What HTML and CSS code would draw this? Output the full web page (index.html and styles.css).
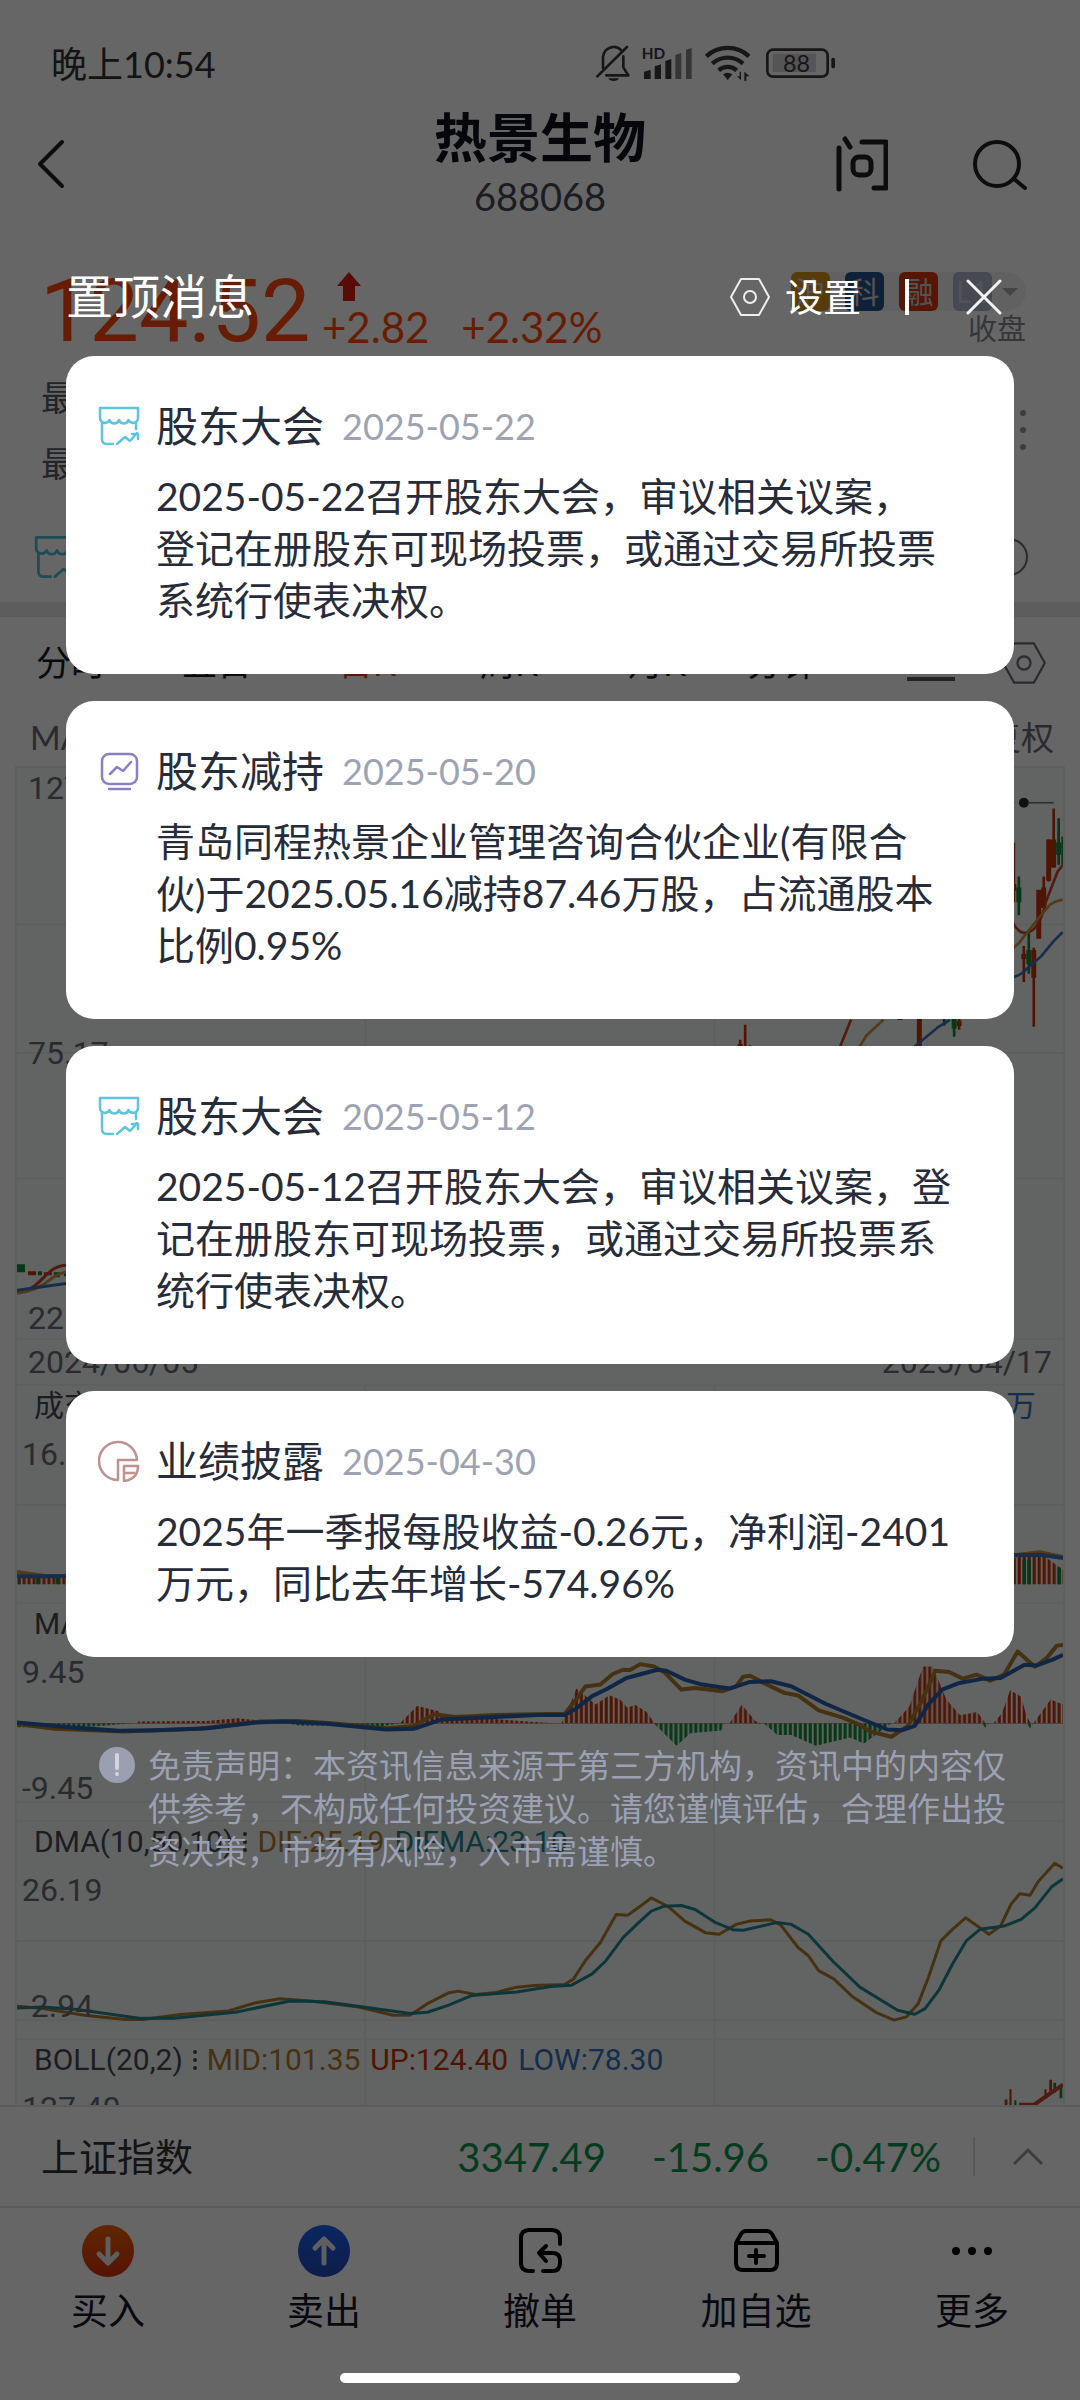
FILE: index.html
```html
<!DOCTYPE html>
<html lang="zh-CN">
<head>
<meta charset="utf-8">
<meta name="viewport" content="width=device-width, initial-scale=1">
<title>热景生物 688068</title>
<link rel="stylesheet" href="styles.css">
</head>
<body>
<svg class="defs" aria-hidden="true">
  <defs>
    <symbol id="shop" viewBox="0 0 42 42">
      <path d="M2 3h38v10a5 5 0 0 1-9.500 2a5 5 0 0 1-9.500 0a5 5 0 0 1-9.500 0A5 5 0 0 1 2 13zM4 18v16q0 5 5 5h6M38 18v6M19 39l8-7 5 4 7-8M34 29h6v5" fill="none" stroke="currentColor" stroke-width="2.500" stroke-linejoin="round" stroke-linecap="round"/>
    </symbol>
    <symbol id="hex" viewBox="0 0 42 42">
      <path d="M12 3h18l10 18-10 18H12L2 21z" fill="none" stroke="currentColor" stroke-width="2" stroke-linejoin="round"/>
      <circle cx="21" cy="21" r="6" fill="none" stroke="currentColor" stroke-width="2"/>
    </symbol>
    <pattern id="red-bars" width="7.250" height="700" y="-100" patternUnits="userSpaceOnUse"><path d="M1 0h4.500v700H1z" fill="#c9330a"/></pattern>
    <pattern id="volume-bars" width="7.250" height="700" y="132" patternUnits="userSpaceOnUse"><path d="M1 0h4.500v700H1z" fill="#c9330a"/></pattern>
    <pattern id="green-bars" width="7.250" height="700" y="-100" patternUnits="userSpaceOnUse"><path d="M1 0h4.500v700H1z" fill="#108a38"/></pattern>
    <linearGradient id="buy" x2="0" y2="1"><stop stop-color="#ee6200"/><stop offset="1" stop-color="#d83010"/></linearGradient>
    <linearGradient id="sell" x2="0" y2="1"><stop stop-color="#1862ee"/><stop offset="1" stop-color="#2348b8"/></linearGradient>
  </defs>
</svg>

<div class="app">
  <div class="status">
    <time>晚上10:54</time>
    <svg class="status-icons" viewBox="45 45 720 120" aria-hidden="true">
      <g fill="none" stroke="#3a3a3a" stroke-width="8" stroke-linecap="round" stroke-linejoin="round">
        <path d="M66 118V84a32 32 0 0 1 55-20M127 82v33l15 24H76M138 54L49 142"/>
        <rect x="559" y="62" width="181" height="81" rx="17"/>
      </g>
      <g fill="#3a3a3a">
        <path d="M82 148h32a17 12 0 0 1-32 0zM189 128l20-6v28h-20zM221 112l19-6v44h-19zM253 96l18-6v60h-18z"/>
        <path d="M283 78l18-6v78h-18zM315 62l17-5v93h-17z" fill="#858585"/>
        <path d="M440 153l-14-17a24 24 0 0 1 28 0z"/><rect x="751" y="86" width="11" height="32" rx="5"/>
        <path d="M480 128v26l-12-12h8v-14zM490 156v-28l16 14h-10v14z"/>
        <rect x="575" y="74" width="130" height="55" fill="#d5d5d5"/>
      </g>
      <path d="M376 82a94 94 0 0 1 128 0M394 104a68 68 0 0 1 92 0M413 124a40 40 0 0 1 54 0" fill="none" stroke="#3a3a3a" stroke-width="13"/>
      <text x="182" y="90" font-size="46" font-weight="700">HD</text>
      <text x="606" y="128" font-size="70">88</text>
    </svg>
  </div>

  <header class="top">
    <button class="icon-button back" aria-label="返回"><svg viewBox="0 0 30 52"><path d="M26 4L4 26l22 22" fill="none" stroke="#222" stroke-width="4" stroke-linecap="round" stroke-linejoin="round"/></svg></button>
    <div class="stock"><h1>热景生物</h1><span>688068</span></div>
    <div class="top-actions">
      <button class="icon-button ask" aria-label="问"><svg viewBox="0 0 52 56"><path d="M3 12v41M9 3l5 8M26 6h24v46h-12" fill="none" stroke="#222" stroke-width="5" stroke-linecap="round" stroke-linejoin="round"/><rect x="17" y="21" width="18" height="18" rx="6" fill="none" stroke="#222" stroke-width="5"/></svg></button>
      <button class="icon-button find" aria-label="搜索"><svg viewBox="0 0 56 52"><g fill="none" stroke="#222" stroke-width="4" stroke-linecap="round"><circle cx="25" cy="26" r="22"/><path d="M42 41l11 9"/></g></svg></button>
    </div>
  </header>

  <section class="quote">
    <strong class="price">124.52</strong>
    <div class="change">
      <svg viewBox="0 0 24 32" aria-hidden="true"><path d="M12 0l12 14h-6v15H6V14H0z" fill="#d71c10"/></svg>
      <p><span>+2.82</span><span>+2.32%</span></p>
    </div>
    <div class="market">
      <div class="tags"><b class="sh">沪</b><b class="ke">科</b><b class="rong">融</b><b class="level">L1</b><i></i></div>
      <span>收盘</span>
    </div>
  </section>
  <section class="stats">
    <div><p>最高</p><p>最低</p></div>
    <svg viewBox="0 0 8 42" aria-hidden="true"><path d="M4 4h0M4 21h0M4 38h0" stroke="#98989c" stroke-width="6" stroke-linecap="round"/></svg>
  </section>
  <section class="notice">
    <svg class="shop"><use href="#shop"/></svg>
    <svg class="ring" viewBox="0 0 40 40"><circle cx="20" cy="20" r="18" fill="none" stroke="#686b78" stroke-width="2"/></svg>
  </section>
  <nav class="periods">
    <button>分时</button><button>五日</button><button class="active">日K</button><button>周K</button><button>月K</button><button>分钟</button>
    <svg class="indicator" viewBox="0 0 48 42"><path d="M0 37h48M8 26l12-10 10 8 12-14" fill="none" stroke="#555867" stroke-width="4"/></svg>
    <svg class="gear"><use href="#hex"/></svg>
  </nav>
  <div class="average"><span>MA</span><span>前复权</span></div>

  <main class="charts">
    <div class="panel main">
      <svg viewBox="15 766 1050 572" preserveAspectRatio="none" aria-hidden="true">
        <path d="M15 923h1050M15 1052h1050M15 1178h1050M365 766v572M715 766v572" class="grid"/>
        <g transform="translate(700 680) scale(.333)" fill="none">
          <g stroke="#c9330a">
            <path stroke-width="8" d="M948 483v180M978 795v108M1008 800v238M1038 585v95M1053 474v126M1068 380v178M138 1032v66M123 1077v21M783 1010v37"/>
            <path stroke-width="15" d="M948 608v20M978 818v16M1008 807v83M1023 625v148M1038 618v62M1053 474v124M1068 474v84M663 1000v100M783 1020v16M605 1010v8M123 1090v10"/>
          </g>
          <g stroke="#108a38">
            <path stroke-width="8" d="M963 585v117M993 757v121M1083 410v140M1095 465v85M768 1000v68M153 1094v6M738 1010v25"/>
            <path stroke-width="15" d="M963 618v45M993 807v43M1083 483v37M768 1010v33"/>
          </g>
          <g stroke-width="8">
            <path stroke="#c94428" d="M942 720q20 38 43 35q40-5 60-95l35-90 15-19M457 1017l-33 81"/>
            <path stroke="#d0923f" d="M942 803q20-12 34-34l46-58 36-42q15-10 37-14M555 1017l-52 48-20 33"/>
            <path stroke="#3b70bd" d="M942 888q20 0 40-20l48-42 38-46 27-27M755 1017l-35 22-72 59"/>
          </g>
          <path d="M993 363h75" stroke="#777" stroke-width="5"/><circle cx="978" cy="363" r="15" fill="#272c38"/>
          <circle cx="924" cy="363" r="25" fill="#272c38"/>
        </g>
        <path d="M15 1264h8v8h-8zM52 1272h6v5h-6zM36 1271h4v4h-4zM62 1273h4v3h-4z" fill="#108a38"/><path d="M26 1271h8v4h-8zM42 1272h8v3h-8z" fill="#c9330a"/>
        <g fill="none" stroke-width="3"><path d="M15 1292c24 0 28-28 51-27" stroke="#c94428"/><path d="M15 1293q20-2 34-14t32-4" stroke="#d0923f"/><path d="M15 1290l51-7" stroke="#3b70bd"/></g>
      </svg>
      <span>127.40</span><span>75.17</span><span>22.93</span>
    </div>
    <div class="dates"><span>2024/06/05</span><span>2025/04/17</span></div>
    <div class="panel sub">
      <svg viewBox="22 132 1524 654" preserveAspectRatio="none" aria-hidden="true">
        <path d="M22 492h1524M529 132v654M1038 132v654" class="grid"/>
        <path d="M22 732v-20l30-2 44 4v18zM1472 732v-78l40-16 34 50v44z" fill="url(#volume-bars)"/>
        <path d="M24 732v-20h3v20zM50 732v-22h4v22zM79 732v-20h4v20zM1487 732v-75h5v75zM1494 732v-75h5v75zM1538 732v-50h5v50z" fill="#108a38"/>
        <g class="trend"><path d="M22 695l40 12h34M1472 645l40-10 34 15" stroke="#d0923f"/><path d="M22 708h74M1472 645l40-2 34 10" stroke="#3b70bd"/></g>
      </svg>
      <p class="legend"><span>成交量</span><span class="blue end">16.51万</span></p>
      <span>16.51</span>
    </div>
    <div class="panel sub">
      <svg viewBox="22 -114 1524 654" preserveAspectRatio="none" aria-hidden="true">
        <path d="M22 485h1524M529-114v654M1038-114v654" class="grid"/>
        <path d="M198 247v-5l100-2 45-8 30 6 40 9zM580 247l25-52 30 15 20 28 50-6 50 8 50 7zM815 247l8-30 14-75 12 20 16 28 20-28 16 14 10 24 12-8 16 20 12 35zM1060 247l18-56 20 50 8 6zM1300 247l22-50 20-122h14l20 100 20 48 25-10 12 34zM1445 247l12-30 12-70 16 20 8 60 6 20zM1503 247l25-72 18 15v57z" fill="url(#red-bars)"/>
        <path d="M22 247v12h70l40-2 60-10zM415 247l18 7 120 2 28-9zM950 247l33 68 20-38 45-8 4-22zM1110 247l20 36h20l36 32 50-25 20 18 40-61zM1428 247l5 14 5-14zM1494 247l4 16 5-16z" fill="url(#green-bars)"/>
        <path d="M22 247h1524" stroke="#b46550" stroke-width="2"/>
        <g class="trend">
          <path stroke="#b07a2c" d="M22 249L77 264 177 272 287 264 377 242 430 240 480 247 560 262 600 255 630 220 660 228 720 222 820 218 835 180 850 136 872 130 890 98 905 85 915 86 930 68 950 75 965 92 990 145 1010 140 1050 150 1070 135 1080 106 1090 103 1110 125 1140 155 1160 163 1190 208 1225 230 1250 252 1265 272 1296 288 1320 255 1340 180 1360 88 1380 92 1400 112 1420 100 1440 118 1460 100 1480 30 1505 76 1522 50 1537 12 1546 10"/>
          <path stroke="#275fae" d="M22 245L90 258 170 270 225 268 300 262 370 245 410 242 470 248 560 266 600 264 640 236 720 228 780 222 820 222 835 205 860 165 880 145 910 110 955 85 968 88 995 115 1020 130 1060 142 1090 122 1120 120 1150 135 1200 188 1250 232 1290 266 1312 268 1330 255 1350 190 1370 145 1395 125 1430 112 1455 110 1490 70 1508 72 1530 55 1546 40"/>
        </g>
      </svg>
      <p class="legend"><span>MACD(12,26,9)</span></p>
      <span>9.45</span><span class="low">-9.45</span>
    </div>
    <div class="panel sub">
      <svg viewBox="22 -120 1524 654" preserveAspectRatio="none" aria-hidden="true">
        <path d="M22 240h1524M22 480h1524M529-120v654M1038-120v654" class="grid"/>
        <g class="trend thin">
          <path stroke="#b07a2c" d="M22 438L60 445 120 465 180 478 205 478 260 463 330 452 370 427 405 415 450 422 520 440 570 465 595 464 620 430 650 398 665 392 690 402 720 396 750 380 775 375 820 372 833 355 850 300 872 245 895 160 912 162 930 135 946 110 970 135 995 180 1025 215 1045 220 1070 190 1090 180 1120 176 1135 192 1160 260 1175 285 1190 330 1212 355 1240 410 1275 458 1300 480 1318 470 1335 430 1350 350 1368 240 1385 205 1404 170 1425 200 1438 220 1455 195 1470 130 1483 97 1498 102 1510 60 1534 5 1546 20"/>
          <path stroke="#228894" d="M22 443L60 440 110 448 200 474 250 474 340 456 420 422 470 424 540 444 595 460 620 456 650 435 685 405 750 395 800 378 830 374 860 340 880 300 905 230 925 190 946 150 965 135 990 133 1010 145 1040 185 1065 206 1080 208 1130 184 1150 190 1175 220 1210 300 1250 380 1305 450 1330 462 1345 445 1365 390 1385 310 1405 240 1425 205 1460 195 1485 175 1505 140 1530 75 1546 52"/>
        </g>
      </svg>
      <p class="legend"><span>DMA(10,50,10)<i></i></span><span class="gold">DIF:25.19</span><span class="teal">DIFMA:23.10</span></p>
      <span>26.19</span><span class="low">-2.94</span>
    </div>
    <div class="panel boll">
      <svg viewBox="22 534 1524 201" preserveAspectRatio="none" aria-hidden="true">
        <path d="M529 534v201M1038 534v201" class="grid"/>
        <path d="M1461 718v17h4v-17zM1468 686v49h3v-49zM1526 657v40h4v-40zM1519 686v30h3v-30z" fill="#c9330a"/><path d="M1475 720v15h3v-15zM1532 666v30h4v-30zM1541 676v38h4v-38z" fill="#108a38"/>
        <path class="trend" d="M1482 734h22l24-36 18-26" stroke="#c94428"/>
      </svg>
      <p class="legend"><span>BOLL(20,2)<i></i></span><span class="gold">MID:101.35</span><span class="red">UP:124.40</span><span class="blue">LOW:78.30</span></p>
      <span>127.40</span>
    </div>
  </main>

  <section class="index">
    <span class="index-name">上证指数</span><span>3347.49</span><span>-15.96</span><span>-0.47%</span>
    <button class="icon-button expand" aria-label="展开"><svg viewBox="0 0 32 20"><path d="M2 17L16 3l14 14" fill="none" stroke="#9699a6" stroke-width="3"/></svg></button>
  </section>
  <footer class="toolbar">
    <button><svg viewBox="0 0 54 54"><circle cx="27" cy="27" r="26" fill="url(#buy)"/><path d="M27 15v23M18 30l9 9 9-9" class="arrow"/></svg>买入</button>
    <button><svg viewBox="0 0 54 54"><circle cx="27" cy="27" r="26" fill="url(#sell)"/><path d="M27 39V16M18 24l9-9 9 9" class="arrow"/></svg>卖出</button>
    <button><svg viewBox="0 0 54 54"><path d="M20 47h-3q-9 0-9-8V14q0-8 8-8h23q8 0 8 8v6M30 47h9q8 0 8-8v-3q0-7-8-7H27M33 22l-7 7 7 8" class="line"/></svg>撤单</button>
    <button><svg viewBox="0 0 54 54"><path d="M7 19h41M7 19v20q0 7 7 7h27q7 0 7-7V19l-5-9q-2-3-5-3H17q-3 0-5 3zM27 26v13M20 32h15" class="line"/></svg>加自选</button>
    <button><svg viewBox="0 0 54 54"><path d="M11 27h0M27 27h0M43 27h0" stroke="#000" stroke-width="8" stroke-linecap="round"/></svg>更多</button>
  </footer>
</div>

<div class="overlay" role="dialog" aria-label="置顶消息">
  <header class="overlay-head">
    <h2>置顶消息</h2>
    <button class="settings"><svg><use href="#hex"/></svg>设置</button>
    <i class="bar"></i>
    <button class="icon-button close" aria-label="关闭"><svg viewBox="0 0 36 36"><path d="M2 2l32 32M34 2L2 34" stroke="#f2f2f2" stroke-width="3" stroke-linecap="round"/></svg></button>
  </header>
  <div class="cards">
    <article class="card">
      <svg class="cyan"><use href="#shop"/></svg>
      <h3>股东大会 <time>2025-05-22</time></h3>
      <p>2025-05-22召开股东大会，审议相关议案，<br>登记在册股东可现场投票，或通过交易所投票<br>系统行使表决权。</p>
    </article>
    <article class="card">
      <svg viewBox="0 0 42 42"><g fill="none" stroke="#8a80c6" stroke-width="2.500" stroke-linecap="round" stroke-linejoin="round"><rect x="4" y="4" width="35" height="30" rx="7"/><path d="M11 39h21M12 24l7-7 6 4 8-9"/></g></svg>
      <h3>股东减持 <time>2025-05-20</time></h3>
      <p>青岛同程热景企业管理咨询合伙企业(有限合<br>伙)于2025.05.16减持87.46万股，占流通股本<br>比例0.95%</p>
    </article>
    <article class="card">
      <svg class="cyan"><use href="#shop"/></svg>
      <h3>股东大会 <time>2025-05-12</time></h3>
      <p>2025-05-12召开股东大会，审议相关议案，登<br>记在册股东可现场投票，或通过交易所投票系<br>统行使表决权。</p>
    </article>
    <article class="card">
      <svg viewBox="0 0 42 42"><g fill="none" stroke="#c39090" stroke-width="2.500" stroke-linejoin="round"><path d="M20 40A19 19 0 1 1 39 20H20z"/><path d="M26 26h14q0 13-14 15z"/><path d="M26 33h11"/></g></svg>
      <h3>业绩披露 <time>2025-04-30</time></h3>
      <p>2025年一季报每股收益-0.26元，净利润-2401<br>万元，同比去年增长-574.96%</p>
    </article>
  </div>
  <aside class="disclaimer">
    <svg viewBox="0 0 36 36" aria-hidden="true"><circle cx="18" cy="18" r="18" fill="#9aa0b2"/><path d="M18 8v13M18 27h0" stroke="#d3d6de" stroke-width="4" stroke-linecap="round"/></svg>
    <p>免责声明：本资讯信息来源于第三方机构，资讯中的内容仅供参考，不构成任何投资建议。请您谨慎评估，合理作出投资决策，市场有风险，入市需谨慎。</p>
  </aside>
  <i class="home"></i>
</div>
</body>
</html>
```
FILE: styles.css
```css
* { box-sizing: border-box; }
body {
  position: relative;
  margin: 0;
  background: #fff;
  color: #272c3a;
  font-family: Lato, "Noto Sans CJK SC", sans-serif;
  line-height: 1.3;
}
h1, h2, h3, p { margin: 0; font-weight: 400; }
svg { display: block; flex: none; }
i { font-style: normal; }
button {
  padding: 0;
  border: 0;
  background: none;
  color: inherit;
  font: inherit;
  cursor: pointer;
}
.defs { position: absolute; width: 0; height: 0; }
.app { display: flex; flex-direction: column; min-height: 100vh; overflow: hidden; }

.status {
  display: flex;
  align-items: center;
  height: 106px;
  padding: 22px 244px 0 51px;
  color: #333;
  font-size: 36px;
}
.status-icons { width: 240px; height: 40px; margin-left: auto; fill: #3a3a3a; }

.top {
  display: grid;
  grid-template-columns: 1fr auto 1fr;
  align-items: center;
  height: 116px;
  padding: 0 52px 0 36px;
}
.back svg { width: 30px; height: 52px; }
.back { justify-self: start; }
.top { padding: 0 36px; }
.stock { text-align: center; color: #444958; font-size: 38px; line-height: 52px; }
.stock h1 { color: #10131f; font-size: 53px; font-weight: 700; line-height: 64px; }
.top-actions { display: flex; justify-content: flex-end; align-items: center; gap: 84px; padding-right: 16px; }
.ask svg { width: 52px; height: 56px; }
.find svg { width: 56px; height: 52px; }

.quote {
  display: flex;
  align-items: flex-start;
  height: 142px;
  padding: 50px 54px 0 40px;
  color: #ff4a08;
}
.price { width: 282px; font: 400 88px/78px Roboto, sans-serif; }
.change svg { width: 24px; height: 32px; margin-left: 15px; }
.change p { display: flex; gap: 32px; font-size: 42px; line-height: 46px; }
.market { margin-left: auto; color: #858894; font-size: 29px; line-height: 36px; text-align: right; }
.tags { display: flex; gap: 15px; height: 39px; border-radius: 6px 20px 20px 6px; background: #f3f3f4; }
.tags b {
  width: 39px;
  border-radius: 6px;
  color: #d0d0d4;
  font-size: 30px;
  font-weight: 400;
  line-height: 38px;
  text-align: center;
}
.tags .sh { background: #d8961c; }
.tags .ke { background: #27508e; }
.tags .rong { background: #d83808; }
.tags .level { background: #aeb3cc; }
.tags i { align-self: center; margin: 0 8px 0 -5px; border: 8px solid transparent; border-top-color: #aaa; border-bottom: 0; }

.stats {
  display: flex;
  justify-content: space-between;
  align-items: center;
  height: 132px;
  padding: 0 53px 0 41px;
  color: #555a68;
  font-size: 35px;
  line-height: 66px;
}
.stats svg { width: 8px; height: 42px; }
.notice {
  display: flex;
  justify-content: space-between;
  align-items: center;
  height: 121px;
  padding: 16px 51px 0 34px;
  border-bottom: 15px solid #e8e8ed;
}
.shop { width: 46px; height: 46px; color: #48bed8; }
.ring { width: 40px; height: 40px; }
.periods {
  display: grid;
  grid-template-columns: 146fr 156fr 142fr 148fr 119fr 160fr 94fr 47fr;
  align-items: center;
  height: 92px;
  padding: 0 32px 0 36px;
  color: #151a28;
  font-size: 35px;
}
.periods button { text-align: left; }
.periods .active { color: #e8401c; }
.indicator { width: 48px; height: 42px; }
.gear { width: 46px; height: 46px; color: #686b78; }
.average {
  display: flex;
  justify-content: space-between;
  height: 57px;
  padding: 0 26px 0 30px;
  color: #686b78;
  font-size: 33px;
  line-height: 56px;
}

.charts { padding: 0 15px; color: #686b78; font-family: Roboto, "Noto Sans CJK SC", sans-serif; font-size: 32px; line-height: 40px; }
.panel, .dates {
  border: 2px solid #eaf0ed;
  border-width: 2px 2px 0;
  background: #f5faf7;
}
.panel { position: relative; display: flex; flex-direction: column; overflow: hidden; }
.panel > svg { position: absolute; inset: 0; width: 100%; height: 100%; }
.panel > span, .legend { position: relative; }
.grid { fill: none; stroke: #e8eeeb; stroke-width: 2; vector-effect: non-scaling-stroke; }
.trend, .trend path { fill: none; stroke-width: 4; stroke-linejoin: round; vector-effect: non-scaling-stroke; }
.thin path { stroke-width: 3; }
.main { justify-content: space-between; height: 572px; padding: 0 11px; }
.dates { display: flex; justify-content: space-between; height: 46px; padding: 2px 11px; }
.sub { height: 218px; padding: 0 5px; }
.boll { height: 67px; padding: 0 5px; }
.legend { display: flex; gap: 10px; padding-left: 12px; color: #474a55; font-size: 30px; }
.legend i {
  display: inline-block;
  height: 20px;
  margin-left: 10px;
  border-left: 4px dotted #474a55;
}
.sub > .legend + span { margin-top: 8px; }
.sub > .low { margin-top: 76px; }
.legend .end { margin-left: auto; padding-right: 22px; }
.legend .gold { color: #b07a2c; }
.legend .teal { color: #218795; }
.legend .red { color: #c9330a; }
.legend .blue { color: #3370c0; }
.boll .legend + span { margin-top: 8px; }

.index {
  display: flex;
  align-items: center;
  gap: 46px;
  height: 103px;
  padding: 0 36px 0 41px;
  border: 2px solid #e2e4e6;
  border-width: 2px 0;
  color: #0b9650;
  font-size: 40px;
}
.index-name { flex: 1; color: #333; font-size: 38px; }
.expand { display: flex; align-items: center; height: 39px; margin-left: -14px; padding-left: 37px; border-left: 2px solid #dcdde2; }
.expand svg { width: 32px; height: 20px; }
.toolbar {
  display: grid;
  grid-template-columns: repeat(5, 1fr);
  align-items: start;
  padding: 16px 0 62px;
  color: #14172a;
  font-size: 37px;
}
.toolbar button { display: flex; flex-direction: column; align-items: center; gap: 8px; line-height: 50px; }
.toolbar svg { width: 54px; height: 54px; }
.arrow { fill: none; stroke: #eee; stroke-width: 5; stroke-linecap: round; stroke-linejoin: round; }
.line { fill: none; stroke: #000; stroke-width: 4; stroke-linecap: round; stroke-linejoin: round; }

/* Dialog over the dimmed page */
.overlay {
  position: absolute;
  inset: 0;
  display: flex;
  flex-direction: column;
  padding: 266px 66px 17px;
  background: rgba(0, 0, 0, .6);
}
.overlay-head { display: flex; align-items: center; height: 62px; padding-right: 12px; color: #fff; }
.overlay-head h2 { flex: 1; font-size: 47px; }
.settings { display: flex; align-items: center; gap: 14px; font-size: 38px; }
.settings svg { width: 42px; height: 42px; color: #eee; }
.bar { width: 4px; height: 36px; margin: 0 57px 0 44px; background: #fff; }
.close svg { width: 36px; height: 36px; }
.cards { display: grid; gap: 27px; margin-top: 28px; }
.card {
  display: grid;
  grid-template-columns: 42px 1fr;
  column-gap: 16px;
  row-gap: 19px;
  padding: 45px 24px 48px 32px;
  border-radius: 28px;
  background: #fff;
}
.card svg { width: 42px; height: 42px; align-self: center; }
.cyan { color: #5fc4de; }
.card h3 { display: flex; gap: 18px; font-size: 42px; line-height: 50px; }
.card time { color: #9da3b3; font-size: 36px; }
.card p { grid-column: 2; font-size: 39px; line-height: 52px; }
.disclaimer {
  display: flex;
  gap: 13px;
  margin-top: 87px;
  padding-left: 33px;
  color: #9ba1b2;
  font-size: 33px;
  line-height: 43px;
}
.disclaimer svg { width: 36px; height: 36px; margin-top: 3px; }
.home { width: 400px; height: 10px; margin: auto auto 0; border-radius: 5px; background: #fff; }
```
